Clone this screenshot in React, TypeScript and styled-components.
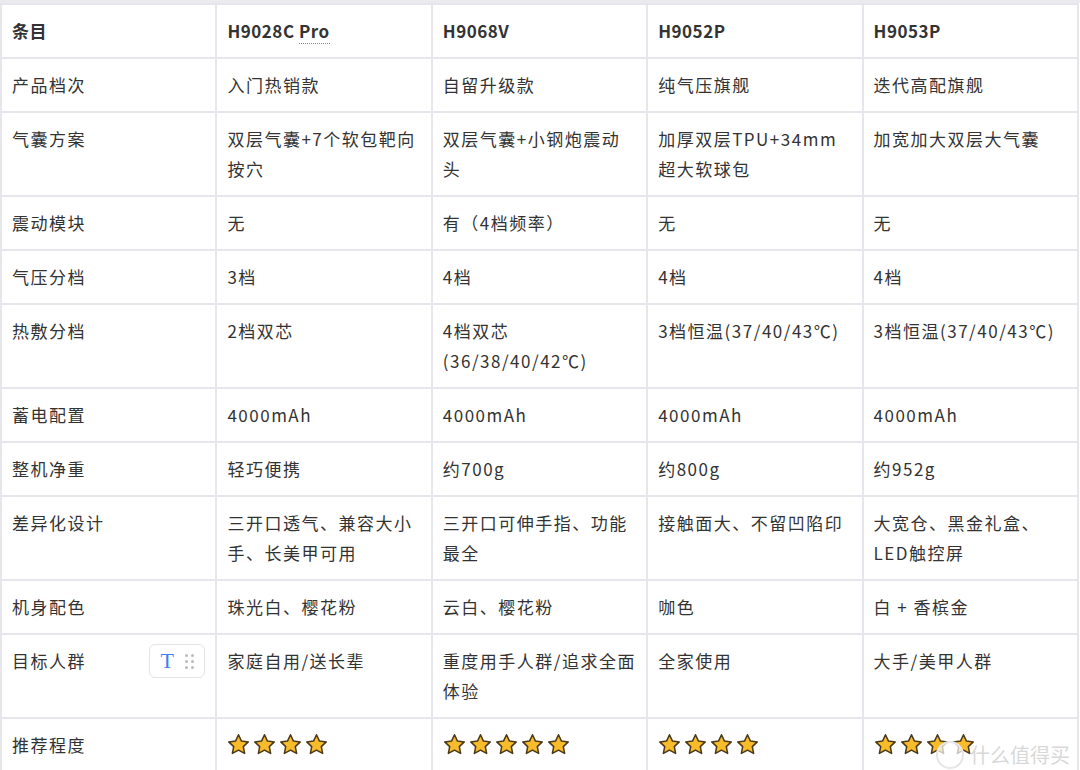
import styled, { createGlobalStyle } from 'styled-components'

const Global = createGlobalStyle`
  body { margin: 0; background: #fff; font-family: "Noto Sans CJK SC", "Noto Sans", sans-serif; }
`

const Page = styled.div`
  position: relative;
  border-top: 3px solid #ebebef;
`

const Table = styled.table`
  width: 1079px;
  border-collapse: collapse;
  table-layout: fixed;
  color: #333;
  font-size: 17px;
  letter-spacing: 1.5px;
`

const Cell = styled.td<{ $head?: boolean }>`
  border: 2px solid #e6e6ec;
  padding: 11px 8px 11px 10px;
  line-height: 30px;
  vertical-align: top;
  font-weight: ${({ $head }) => ($head ? 700 : 400)};
  letter-spacing: ${({ $head }) => ($head ? '0.5px' : 'inherit')};
  position: relative;
`

const Dotted = styled.span`
  border-bottom: 1px dotted #888;
`

const TextTag = styled.div`
  position: absolute;
  right: 10px;
  top: 9px;
  width: 54px;
  height: 32px;
  border: 1px solid #e3e3e8;
  border-radius: 6px;
  display: flex;
  align-items: center;
  justify-content: center;
  gap: 10px;
  color: #3f7ef0;
  font-family: "Liberation Serif", serif;
  font-size: 22px;
  background: #fff;
`

const Grip = styled.span`
  display: grid;
  grid-template-columns: 3px 3px;
  gap: 3px;
  span { width: 3px; height: 3px; background: #bbb; border-radius: 50%; }
`

const Stars = styled.div`
  display: flex;
  gap: 3px;
  padding-top: 3px;
`

const Watermark = styled.div`
  position: absolute;
  right: 10px;
  bottom: 4px;
  display: flex;
  align-items: center;
  gap: 6px;
  color: #d8d8d8;
  font-size: 20px;
  font-family: "Noto Sans CJK SC", sans-serif;
`

const Logo = styled.div`
  width: 24px;
  height: 24px;
  border-radius: 50%;
  border: 2px solid #e6e6e6;
  background: rgba(255,255,255,0.7);
`

const Star = () => (
  <svg width="23" height="23" viewBox="0 0 24 24">
    <path
      d="M12 1.8l3.1 6.6 7.1.9-5.2 4.9 1.4 7.1L12 17.8l-6.4 3.5 1.4-7.1-5.2-4.9 7.1-.9z"
      fill="#f8bb2a"
      stroke="#4a3a1a"
      strokeWidth="1.6"
      strokeLinejoin="round"
    />
  </svg>
)

const stars = (n: number) => (
  <Stars>
    {Array.from({ length: n }).map((_, i) => (
      <Star key={i} />
    ))}
  </Stars>
)

const rows: (string | JSX.Element)[][] = [
  ['产品档次', '入门热销款', '自留升级款', '纯气压旗舰', '迭代高配旗舰'],
  ['气囊方案', '双层气囊+7个软包靶向按穴', '双层气囊+小钢炮震动头', '加厚双层TPU+34mm超大软球包', '加宽加大双层大气囊'],
  ['震动模块', '无', '有（4档频率）', '无', '无'],
  ['气压分档', '3档', '4档', '4档', '4档'],
  ['热敷分档', '2档双芯', '4档双芯(36/38/40/42℃)', '3档恒温(37/40/43℃)', '3档恒温(37/40/43℃)'],
  ['蓄电配置', '4000mAh', '4000mAh', '4000mAh', '4000mAh'],
  ['整机净重', '轻巧便携', '约700g', '约800g', '约952g'],
  ['差异化设计', '三开口透气、兼容大小手、长美甲可用', '三开口可伸手指、功能最全', '接触面大、不留凹陷印', '大宽仓、黑金礼盒、LED触控屏'],
  ['机身配色', '珠光白、樱花粉', '云白、樱花粉', '咖色', '白 + 香槟金'],
  ['目标人群', '家庭自用/送长辈', '重度用手人群/追求全面体验', '全家使用', '大手/美甲人群'],
  ['推荐程度', stars(4), stars(5), stars(4), stars(4)],
]

export default function App() {
  return (
    <Page>
      <Global />
      <Table>
        <tbody>
          <tr>
            <Cell $head>条目</Cell>
            <Cell $head>
              H9028C <Dotted>Pro</Dotted>
            </Cell>
            <Cell $head>H9068V</Cell>
            <Cell $head>H9052P</Cell>
            <Cell $head>H9053P</Cell>
          </tr>
          {rows.map((r, i) => (
            <tr key={i}>
              {r.map((c, j) => (
                <Cell key={j}>
                  {c}
                  {i === 9 && j === 0 && (
                    <TextTag>
                      T
                      <Grip>
                        {Array.from({ length: 6 }).map((_, k) => (
                          <span key={k} />
                        ))}
                      </Grip>
                    </TextTag>
                  )}
                </Cell>
              ))}
            </tr>
          ))}
        </tbody>
      </Table>
      <Watermark>
        <Logo />
        什么值得买
      </Watermark>
    </Page>
  )
}
